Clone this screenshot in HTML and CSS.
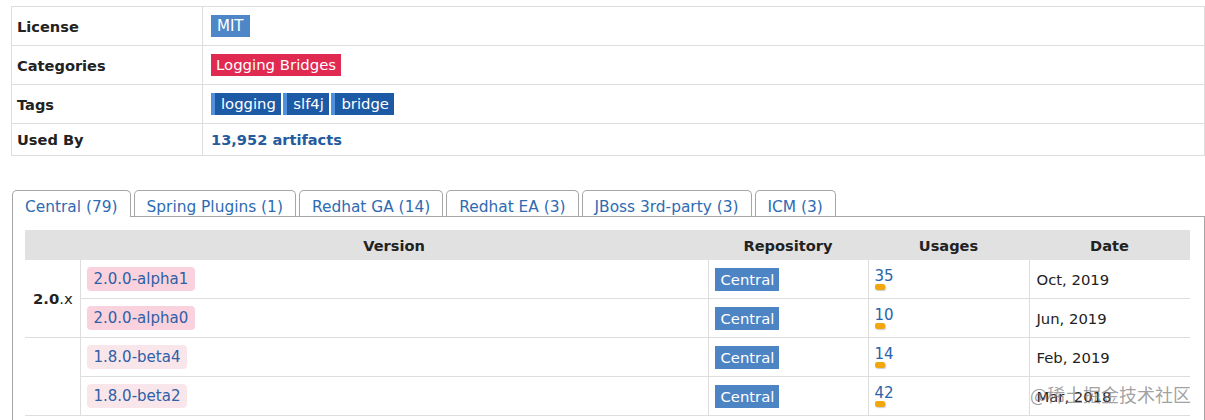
FILE: index.html
```html
<!DOCTYPE html>
<html>
<head>
<meta charset="utf-8">
<link rel="stylesheet" href="styles.css">
</head>
<body>
<div class="page">
  <table class="info">
    <colgroup><col class="c-lbl"><col></colgroup>
    <tr><th>License</th><td><span class="b lic">MIT</span></td></tr>
    <tr><th>Categories</th><td><span class="b cat">Logging Bridges</span></td></tr>
    <tr><th>Tags</th><td><div class="tags"><span class="b tag">logging</span><span class="b tag">slf4j</span><span class="b tag">bridge</span></div></td></tr>
    <tr class="short"><th>Used By</th><td><a class="artifacts" href="#">13,952 artifacts</a></td></tr>
  </table>

  <div class="tabs">
    <ul class="tablist">
      <li class="tab active"><a href="#">Central (79)</a></li>
      <li class="tab"><a href="#">Spring Plugins (1)</a></li>
      <li class="tab"><a href="#">Redhat GA (14)</a></li>
      <li class="tab"><a href="#">Redhat EA (3)</a></li>
      <li class="tab"><a href="#">JBoss 3rd-party (3)</a></li>
      <li class="tab"><a href="#">ICM (3)</a></li>
    </ul>
    <div class="panel">
      <table class="versions">
        <colgroup>
          <col class="c-grp"><col class="c-ver"><col class="c-repo"><col class="c-use"><col class="c-date">
        </colgroup>
        <thead>
          <tr><th></th><th>Version</th><th>Repository</th><th>Usages</th><th>Date</th></tr>
        </thead>
        <tbody>
          <tr>
            <td class="grp" rowspan="2"><b>2.0</b>.x</td>
            <td class="ver"><a class="vbadge alpha" href="#">2.0.0-alpha1</a></td>
            <td class="repo"><span class="b rep">Central</span></td>
            <td class="use"><a href="#">35</a><span class="bar"></span></td>
            <td class="date">Oct, 2019</td>
          </tr>
          <tr>
            <td class="ver"><a class="vbadge alpha" href="#">2.0.0-alpha0</a></td>
            <td class="repo"><span class="b rep">Central</span></td>
            <td class="use"><a href="#">10</a><span class="bar"></span></td>
            <td class="date">Jun, 2019</td>
          </tr>
          <tr>
            <td class="grp" rowspan="2"></td>
            <td class="ver"><a class="vbadge beta" href="#">1.8.0-beta4</a></td>
            <td class="repo"><span class="b rep">Central</span></td>
            <td class="use"><a href="#">14</a><span class="bar"></span></td>
            <td class="date">Feb, 2019</td>
          </tr>
          <tr>
            <td class="ver"><a class="vbadge beta" href="#">1.8.0-beta2</a></td>
            <td class="repo"><span class="b rep">Central</span></td>
            <td class="use"><a href="#">42</a><span class="bar"></span></td>
            <td class="date">Mar, 2018</td>
          </tr>
        </tbody>
      </table>
    </div>
  </div>

  <div class="watermark">@稀土掘金技术社区</div>
</div>
</body>
</html>
```

FILE: styles.css
```css
html, body {
  margin: 0;
  padding: 0;
  background: #fff;
  overflow: hidden;
}
body {
  font-family: "DejaVu Sans", Verdana, sans-serif;
  font-size: 14.8px;
  color: #222;
}
a {
  text-decoration: none;
  color: #2b63a8;
}
.page {
  position: relative;
  padding: 6px 0 0 11px;
  height: 414px;
}

/* info table */
.info {
  width: 1194px;
  border-collapse: collapse;
  table-layout: fixed;
}
.info .c-lbl { width: 191px; }
.info th, .info td {
  border: 1px solid #ddd;
  height: 38px;
  padding: 0;
  vertical-align: middle;
}
.info th {
  text-align: left;
  font-weight: bold;
  padding-left: 5px;
  font-size: 14.6px;
}
.info td { padding-left: 8px; }
.info tr.short th, .info tr.short td { height: 31px; }

.b {
  display: inline-block;
  color: #fff;
  height: 22px;
  line-height: 22px;
  vertical-align: middle;
}
.lic { background: #4d87c7; padding: 0 6px; font-size: 15px; }
.cat { background: #e02a51; padding: 0 5px; font-size: 14.9px; }
.tags { display: flex; gap: 2.5px; }
.tag {
  background: #1c5aa6;
  border-left: 4px solid #4f8fdb;
  padding: 0 5px 0 6px;
}
.artifacts {
  font-weight: bold;
  color: #255b9d;
  font-size: 14.6px;
}

/* tabs */
.tabs {
  margin: 34px 0 0 1px;
  width: 1193px;
}
.tablist {
  list-style: none;
  margin: 0 0 -1px 0;
  padding: 0;
  display: flex;
  align-items: flex-start;
  gap: 3px;
}
.tab {
  box-sizing: border-box;
  height: 26px;
  border: 1px solid #a6a6a6;
  border-bottom: 0;
  border-radius: 5px 5px 0 0;
  background: #fff;
  padding: 7px 12px 0 12px;
  font-size: 15.4px;
  line-height: 19px;
  white-space: nowrap;
  overflow: hidden;
}
.tab a { color: #2e6bb2; }
.tab.active {
  height: 27px;
  position: relative;
  z-index: 1;
}
.panel {
  border: 1px solid #a6a6a6;
  background: #fff;
  padding: 13px 13px 0 12px;
  height: 300px;
}

/* versions table */
.versions {
  width: 1165px;
  border-collapse: collapse;
  table-layout: fixed;
}
.c-grp { width: 55px; }
.c-ver { width: 628px; }
.c-repo { width: 160px; }
.c-use { width: 161px; }
.c-date { width: 161px; }
.versions th {
  background: #e1e1e1;
  height: 30px;
  padding: 0;
  font-weight: bold;
  text-align: center;
  font-size: 14.6px;
}
.versions td {
  border: 1px solid #ddd;
  height: 38px;
  padding: 0 0 0 6px;
  vertical-align: middle;
}
.versions tbody tr:first-child td { border-top: 0; }
.versions td.grp { border-left: 0; padding-left: 8px; }
.versions td.date { border-right: 0; padding-left: 7px; }
.vbadge {
  display: inline-block;
  height: 24px;
  line-height: 24px;
  padding: 0 7px;
  border-radius: 4px;
  color: #2f5fa6;
  vertical-align: middle;
  font-size: 15px;
}
.alpha { background: #fad2de; }
.beta { background: #f9e6eb; }
.rep {
  background: #4d84c4;
  height: 23px;
  line-height: 23px;
  padding: 0 5px 0 6px;
}
.use a {
  display: block;
  line-height: 16px;
  font-size: 15px;
}
.bar {
  display: block;
  width: 10px;
  height: 6px;
  border-radius: 2px;
  background: #f3a70e;
  box-shadow: 1px 1px 1px rgba(0, 0, 0, 0.2);
}

.watermark {
  position: absolute;
  left: 1030px;
  top: 382px;
  font-family: "Noto Sans CJK SC", sans-serif;
  font-size: 18px;
  line-height: 24px;
  color: rgba(120, 120, 120, 0.7);
  white-space: nowrap;
}
```
